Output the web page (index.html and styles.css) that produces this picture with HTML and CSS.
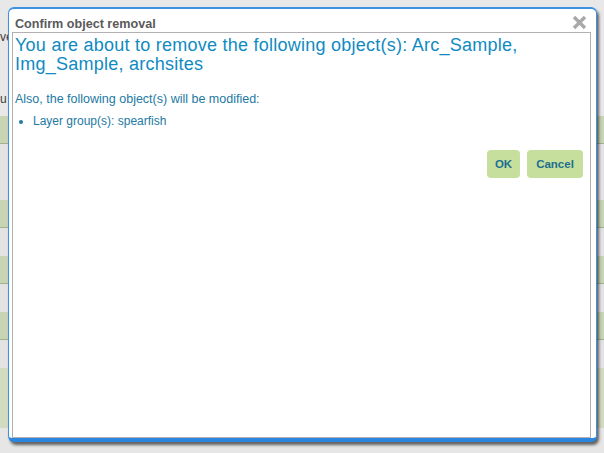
FILE: index.html
```html
<!DOCTYPE html>
<html>
<head>
<meta charset="utf-8">
<link rel="stylesheet" href="styles.css">
</head>
<body>
<div class="page">
  <div class="top-area">
    <div class="frag frag-ve">ve</div>
    <div class="frag frag-u">u</div>
  </div>
  <div class="row green"></div>
  <div class="row light"></div>
  <div class="row light"></div>
  <div class="row green"></div>
  <div class="row light"></div>
  <div class="row green"></div>
  <div class="row light"></div>
  <div class="row green"></div>
  <div class="row light"></div>
  <div class="row bottom"></div>
</div>

<div class="dialog">
  <div class="titlebar">
    <span class="title">Confirm object removal</span>
    <svg class="close" width="15" height="15" viewBox="0 0 15 15">
      <path d="M2 2 L13 13 M13 2 L2 13" stroke="#a9a9a9" stroke-width="3.4" stroke-linecap="butt"/>
    </svg>
  </div>
  <div class="content">
    <h1 class="heading">You are about to remove the following object(s): Arc_Sample, Img_Sample, archsites</h1>
    <p class="note">Also, the following object(s) will be modified:</p>
    <ul class="list">
      <li>Layer group(s): spearfish</li>
    </ul>
    <div class="actions">
      <button class="btn btn-ok">OK</button>
      <button class="btn btn-cancel">Cancel</button>
    </div>
  </div>
</div>
</body>
</html>
```

FILE: styles.css
```css
html, body {
  margin: 0;
  padding: 0;
}
body {
  width: 604px;
  height: 453px;
  overflow: hidden;
  background: #e6e6e6;
  font-family: "Liberation Sans", Arial, sans-serif;
  position: relative;
}
.page {
  display: flex;
  flex-direction: column;
}
.top-area {
  height: 116px;
  background: #e8e8e8;
  position: relative;
}
.frag {
  position: absolute;
  font-size: 12px;
  color: #3a3a3a;
}
.frag-ve { left: 0; top: 30px; }
.frag-u { left: 0; top: 92px; }
.row {
  height: 28px;
}
.row.green {
  background: #c9d4b4;
  height: 27px;
  border-bottom: 1px solid #9fb28a;
}
.row.light {
  background: #e3e3e3;
}
.row.bottom {
  height: 60px;
  background: #d2dbbf;
}
.dialog {
  position: absolute;
  left: 8px;
  top: 7px;
  width: 587px;
  height: 429px;
  background: #fff;
  border: 1px solid #3d90e4;
  border-top-width: 2px;
  border-bottom: 4px solid #2a86e0;
  border-radius: 6px;
  box-shadow: 2px 3px 3px rgba(40, 40, 40, 0.7);
  display: flex;
  flex-direction: column;
}
.titlebar {
  height: 23px;
  display: flex;
  align-items: center;
  justify-content: space-between;
  padding: 0 9px 0 6px;
}
.title {
  font-weight: bold;
  font-size: 12.6px;
  color: #5a5a5a;
  margin-top: 6px;
}
.close {
  margin-top: 4px;
}
.content {
  flex: 1;
  margin: 0 5px 0 3px;
  border: 1px solid #b3b0b3;
  padding: 0 2px;
  display: flex;
  flex-direction: column;
}
.heading {
  margin: 3px 0 0 0;
  font-weight: normal;
  font-size: 18px;
  letter-spacing: 0.25px;
  line-height: 19px;
  color: #0f8bc2;
}
.note {
  margin: 18px 0 0 0;
  font-size: 12.5px;
  line-height: 14px;
  color: #2379a3;
}
.list {
  margin: 8px 0 0 0;
  padding: 0 0 0 18px;
  font-size: 12px;
  line-height: 14px;
  color: #2379a3;
}
.actions {
  display: flex;
  justify-content: flex-end;
  gap: 7px;
  margin-top: 22px;
  padding-right: 5px;
}
.btn {
  height: 28px;
  padding: 0;
  border: 0;
  border-radius: 4px;
  background: #c6df9c;
  color: #1d6f8f;
  font-family: "Liberation Sans", Arial, sans-serif;
  font-weight: bold;
  font-size: 11.5px;
}
.btn-ok { width: 33px; }
.btn-cancel { width: 56px; }
```
